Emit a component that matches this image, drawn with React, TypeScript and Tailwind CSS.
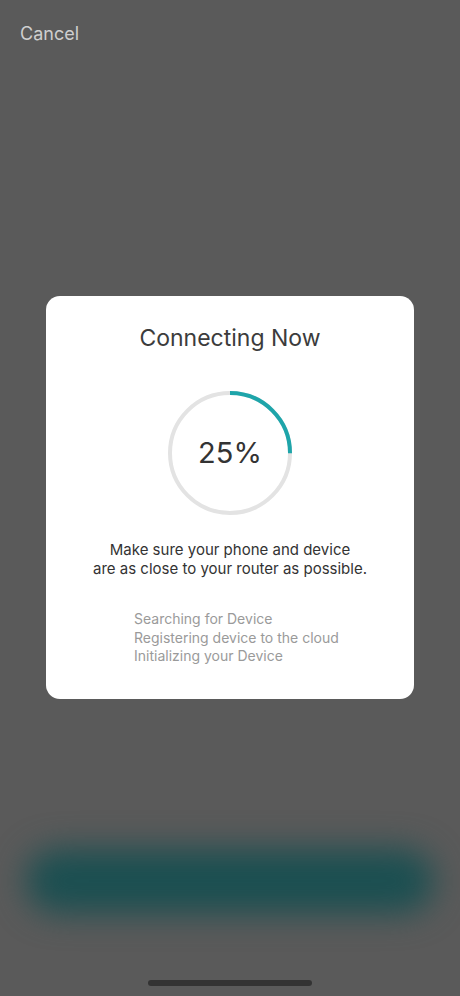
import React from "react";

const steps = [
  "Searching for Device",
  "Registering device to the cloud",
  "Initializing your Device",
];

const ProgressRing = ({ percent }: { percent: number }) => {
  const r = 60;
  const c = 2 * Math.PI * r;
  return (
    <div className="relative w-[128px] h-[128px]">
      <svg width="128" height="128" viewBox="0 0 128 128">
        <circle cx="64" cy="64" r={r} fill="none" stroke="#e3e3e3" strokeWidth="4" />
        <circle
          cx="64"
          cy="64"
          r={r}
          fill="none"
          stroke="#1ea5aa"
          strokeWidth="4"
          strokeDasharray={`${(c * percent) / 100} ${c}`}
          transform="rotate(-90 64 64)"
        />
      </svg>
      <div className="absolute inset-0 flex items-center justify-center text-[29px] text-[#333]">
        {percent}%
      </div>
    </div>
  );
};

const App = () => {
  return (
    <div className="w-[460px] h-[996px] bg-[#5a5a5a] flex flex-col overflow-hidden font-['Inter',sans-serif]">
      <div className="px-5 pt-[22px] text-[18px] leading-6 text-[#cfcfcf]">Cancel</div>

      <div className="mt-[250px] mx-[46px] bg-white rounded-[14px] h-[403px] flex flex-col items-center">
        <h1 className="mt-[28px] text-[23px] leading-7 text-[#3c3c3c]">Connecting Now</h1>
        <div className="mt-[37px]">
          <ProgressRing percent={25} />
        </div>
        <p className="mt-[23px] text-center text-[15px] leading-[19px] text-[#333]">
          Make sure your phone and device
          <br />
          are as close to your router as possible.
        </p>
        <ul className="mt-[32px] self-start ml-[88px] text-[14px] leading-[18.5px] text-[#9a9a9a]">
          {steps.map((s, i) => (
            <li key={i}>{s}</li>
          ))}
        </ul>
      </div>

      <div className="mt-[150px] mx-[26px] h-[64px] rounded-full bg-[#1b4f51] blur-[16px]" />

      <div className="mt-auto mb-[10px] mx-auto w-[164px] h-[6px] rounded-full bg-[#333]" />
    </div>
  );
};

export default App;
